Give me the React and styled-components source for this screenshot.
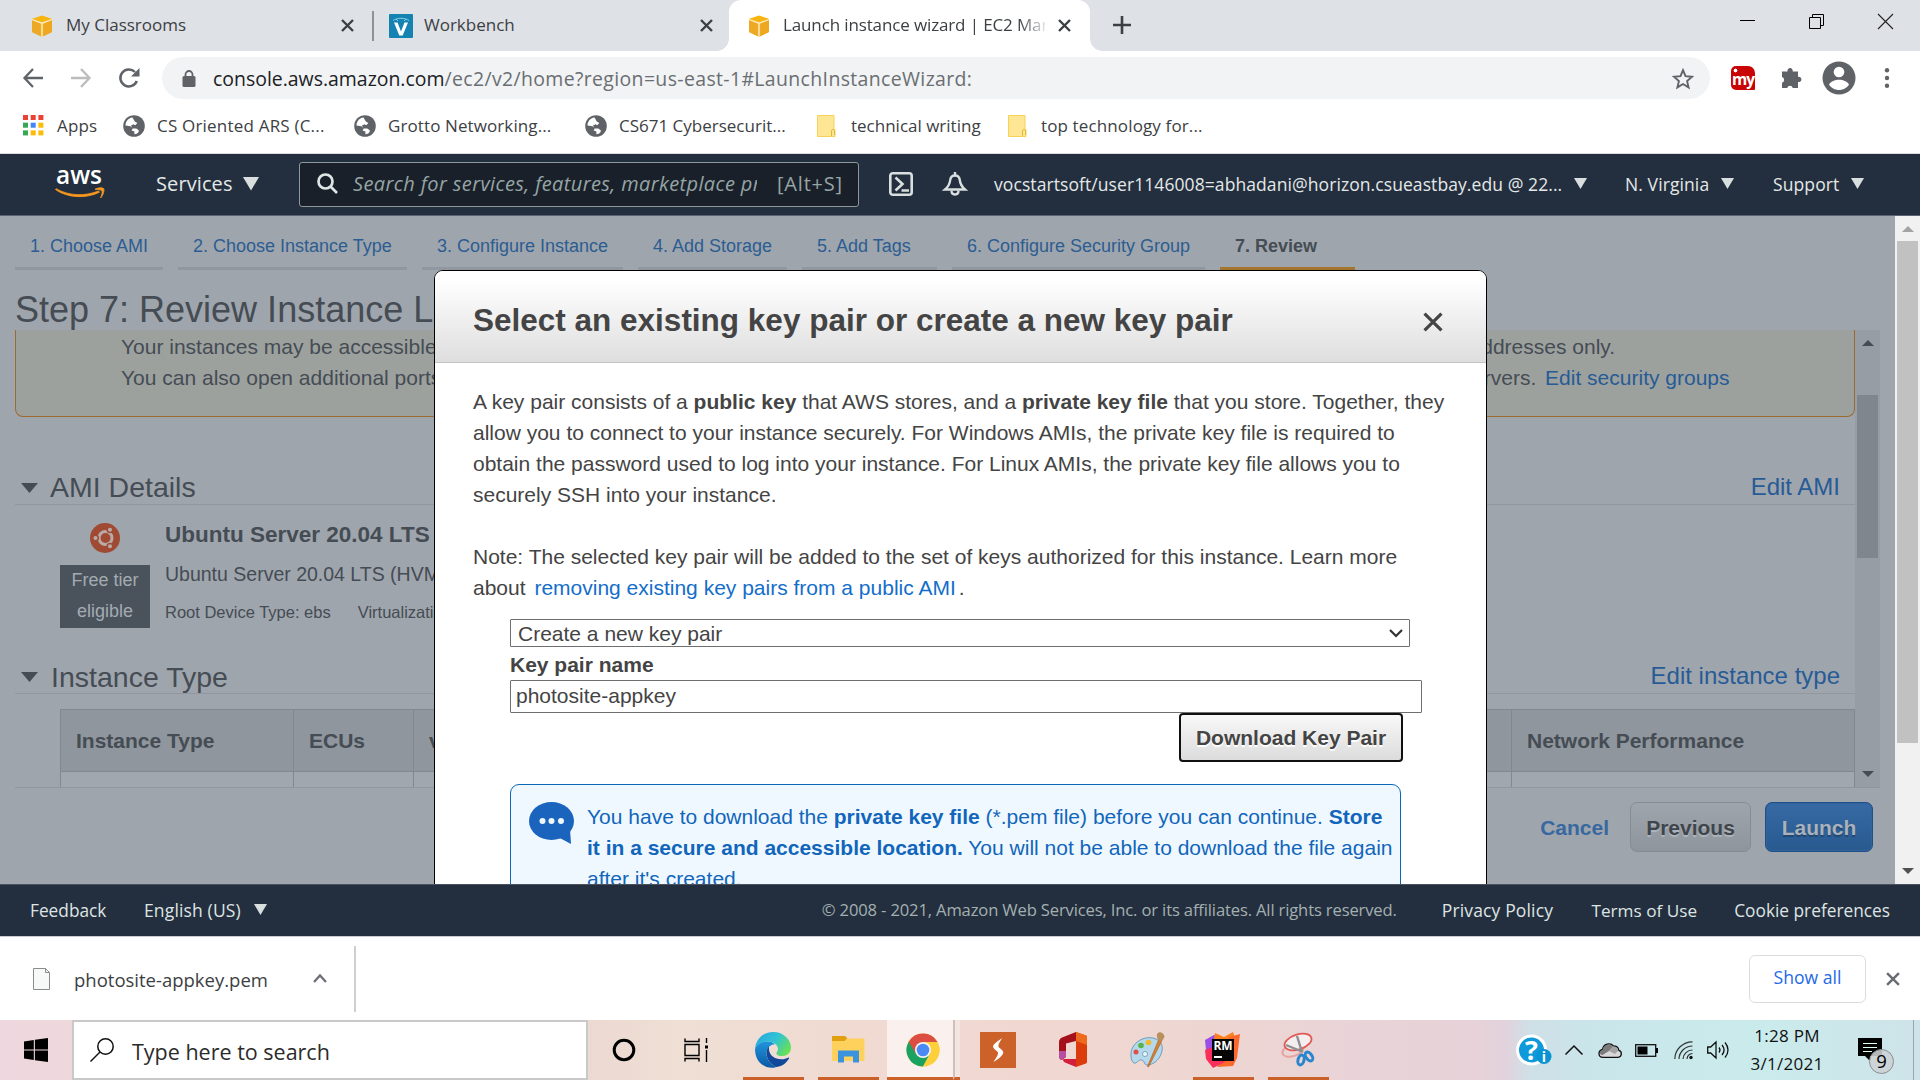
import React from "react";
import styled, { createGlobalStyle, css } from "styled-components";

const UI = `"Open Sans", "Noto Sans", sans-serif`;
const ARIAL = `"Liberation Sans", Arial, sans-serif`;

const GlobalStyle = createGlobalStyle`
  * { box-sizing: border-box; }
  html, body { margin: 0; padding: 0; overflow: hidden; }
  svg { display: block; flex: none; overflow: visible; }
`;

const Screen = styled.div`
  width: 1920px;
  height: 1080px;
  display: flex;
  flex-direction: column;
  overflow: hidden;
  background: #fff;
  font-family: ${UI};
  color: #3c4043;
`;

/* ---------- browser chrome ---------- */

const TabStrip = styled.div`
  flex: none;
  height: 51px;
  display: flex;
  background: #dee1e6;
`;

const Tab = styled.div`
  position: relative;
  display: flex;
  align-items: center;
  width: ${(p) => p.$w}px;
  padding-left: ${(p) => p.$pl}px;
  padding-right: ${(p) => p.$pr}px;
  height: 51px;
  ${(p) =>
    p.$active &&
    css`
      background: #fff;
      border-radius: 12px 12px 0 0;
      &::before,
      &::after {
        content: "";
        position: absolute;
        bottom: 0;
        width: 12px;
        height: 12px;
      }
      &::before {
        left: -12px;
        background: radial-gradient(circle at 0 0, transparent 11.5px, #fff 12px);
      }
      &::after {
        right: -12px;
        background: radial-gradient(circle at 100% 0, transparent 11.5px, #fff 12px);
      }
    `}
`;

const TabTitle = styled.span`
  flex: 1;
  margin-left: ${(p) => p.$gap || 12}px;
  margin-right: ${(p) => (p.$fade ? 13 : 0)}px;
  overflow: hidden;
  white-space: nowrap;
  font-size: 17px;
  line-height: 26px;
  letter-spacing: ${(p) => p.$ls || 0}px;
  margin-top: -1px;
  ${(p) => p.$fade && "mask-image: linear-gradient(90deg, #000 90%, rgba(0, 0, 0, 0.15) 100%);"}
`;

const TabDivider = styled.div`
  width: 2px;
  height: 30px;
  margin-top: 11px;
  background: #8f9296;
`;

const WindowControls = styled.div`
  flex: 1;
  display: flex;
  justify-content: flex-end;
  align-items: flex-start;
  padding: 14px 27px 0 0;
  gap: 54px;
`;

const NewTab = styled.div`
  padding: 16px 0 0 23px;
`;

const Toolbar = styled.div`
  flex: none;
  height: 52px;
  display: flex;
  align-items: center;
  padding: 2px 28px 0 22px;
`;

const NavIcons = styled.div`
  width: 140px;
  display: flex;
  gap: 26px;
`;

const Omnibox = styled.div`
  width: 1548px;
  height: 42px;
  padding: 0 16px 0 20px;
  border-radius: 21px;
  background: #f1f3f4;
  display: flex;
  align-items: center;
`;

const Url = styled.span`
  flex: 1;
  margin-left: 17px;
  font-size: 19.45px;
  letter-spacing: 0.37px;
  color: #6a6e72;
  white-space: nowrap;
  b {
    font-weight: 400;
    letter-spacing: 0;
    color: #202124;
  }
`;

const ToolbarActions = styled.div`
  flex: 1;
  display: flex;
  align-items: center;
  padding-left: 21px;
`;

const MyBadge = styled.div`
  width: 24px;
  height: 24px;
  border-radius: 5px 7px 1px 5px;
  background: radial-gradient(circle at 4.5px 4.5px, #fff 1.6px, transparent 2.2px), #c80404;
  color: #fff;
  font: 700 15.5px/26px ${UI};
  letter-spacing: -0.9px;
  text-align: center;
`;

const ActionSlot = styled.div`
  margin-left: ${(p) => p.$ml}px;
`;

const BookmarkBar = styled.div`
  flex: none;
  height: 51px;
  display: flex;
  align-items: center;
  padding: 0 0 5px 23px;
  border-bottom: 1px solid #dadce0;
`;

const Bookmark = styled.div`
  display: flex;
  align-items: center;
  gap: ${(p) => p.$gap}px;
  width: ${(p) => p.$w}px;
  font-size: 17px;
  letter-spacing: ${(p) => p.$ls || 0}px;
  white-space: nowrap;
`;

/* ---------- AWS navigation ---------- */

const AwsNav = styled.div`
  flex: none;
  height: 62px;
  display: flex;
  align-items: center;
  background: #232f3e;
  border-bottom: 1px solid #5c6270;
  color: #e3e8e8;
  padding-left: 55px;
`;

const NavItem = styled.div`
  display: flex;
  align-items: center;
  justify-content: space-between;
  width: ${(p) => p.$w}px;
  margin-left: ${(p) => p.$ml}px;
  padding-bottom: 2px;
  font-size: ${(p) => p.$s || 17.5}px;
  font-weight: 500;
  letter-spacing: ${(p) => p.$ls || 0}px;
  white-space: nowrap;
`;

const SearchBox = styled.div`
  width: 560px;
  height: 45px;
  margin-left: 40px;
  padding: 0 14px 2px 17px;
  display: flex;
  align-items: center;
  background: #1a2029;
  border: 1px solid #8c989a;
  border-radius: 3px;
  color: #95a5a6;
  font-size: 20px;
`;

const Placeholder = styled.span`
  width: 404px;
  margin-left: 15px;
  margin-right: 20px;
  overflow: hidden;
  white-space: nowrap;
  font-style: italic;
  letter-spacing: ${(p) => p.$ls}px;
`;

const Shortcut = styled.span`
  white-space: nowrap;
  letter-spacing: 0.8px;
`;

/* ---------- console page ---------- */

const Viewport = styled.div`
  position: relative;
  flex: none;
  height: 668px;
  display: flex;
  overflow: hidden;
  font-family: ${ARIAL};
`;

const Wizard = styled.div`
  width: 1895px;
  background: #9fa5ac;
  color: #454c54;
  padding-left: 15px;
  display: flex;
  flex-direction: column;
`;

const Steps = styled.div`
  display: flex;
  gap: 15px;
  height: 54px;
`;

const Step = styled.div`
  width: ${(p) => p.$w}px;
  padding: 18px 0 0 15px;
  font-size: 18px;
  line-height: 24px;
  white-space: nowrap;
  color: ${(p) => (p.$current ? "#454c54" : "#2c5d92")};
  font-weight: ${(p) => (p.$current ? 700 : 400)};
  border-bottom: 3px solid ${(p) => (p.$current ? "#a4752f" : "#91979e")};
`;

const PageTitle = styled.h1`
  margin: 0;
  height: 60px;
  padding-top: 19px;
  font-size: 36px;
  font-weight: 400;
  line-height: 41px;
  white-space: nowrap;
`;

const ReviewPane = styled.div`
  width: 1865px;
  height: 458px;
  display: flex;
  overflow: hidden;
  border-bottom: 1px solid #91979e;
`;

const ReviewBody = styled.div`
  width: 1840px;
  height: 457px;
  overflow: hidden;
`;

const Warning = styled.div`
  height: 87px;
  padding: 1px 0 0 105px;
  background: #9da19e;
  border: 1px solid #9b6a2c;
  border-top: 0;
  border-radius: 0 0 8px 8px;
  font-size: 21px;
  line-height: 31px;
  white-space: nowrap;
`;

const Link = styled.a`
  color: ${(p) => (p.$dim ? "#275b96" : "#146eca")};
  margin: 0 ${(p) => (p.$mr ? p.$mr : 0)}px 0 3px;
`;

const SectionHead = styled.div`
  display: flex;
  align-items: center;
  height: ${(p) => p.$h}px;
  padding: ${(p) => p.$pt}px 15px 0 6px;
  border-bottom: 1px solid #91979e;
  font-size: 28.5px;
  line-height: 32px;
`;

const SectionTitle = styled.span`
  flex: 1;
  margin: ${(p) => p.$mt || 0}px 0 0 ${(p) => p.$ml}px;
`;

const EditLink = styled.a`
  color: #275b96;
  font-size: 24px;
  margin-top: -1px;
`;

const Ami = styled.div`
  display: flex;
  height: 140px;
  padding: 18px 0 0 45px;
`;

const AmiBadgeCol = styled.div`
  width: 90px;
  display: flex;
  flex-direction: column;
  align-items: center;
  gap: 12px;
`;

const FreeTier = styled.div`
  width: 90px;
  height: 63px;
  background: #4a525b;
  color: #a3abb2;
  text-align: center;
  font-size: 18px;
  line-height: 31px;
`;

const AmiInfo = styled.div`
  margin-left: 15px;
  white-space: nowrap;
`;

const AmiName = styled.div`
  font-size: 22.5px;
  font-weight: 700;
  line-height: 24px;
`;

const AmiDesc = styled.div`
  margin-top: 15px;
  font-size: 19.5px;
  line-height: 24px;
`;

const AmiMeta = styled.div`
  display: flex;
  gap: 27px;
  margin-top: 14px;
  font-size: 16.5px;
  line-height: 24px;
`;

const InstanceTable = styled.div`
  width: 1795px;
  margin: 15px 0 0 45px;
  border: 1px solid #81888f;
  display: grid;
  grid-template-columns: 232px 120px 220px 240px 270px 368px 1fr;
`;

const HeadCell = styled.div`
  height: 62px;
  padding-left: 15px;
  background: #8f969d;
  border-left: ${(p) => (p.$first ? 0 : 1)}px solid #81888f;
  border-bottom: 1px solid #81888f;
  font-size: 21px;
  font-weight: 700;
  line-height: 61px;
  white-space: nowrap;
`;

const BodyCell = styled.div`
  height: 40px;
  background: #a1a7ae;
  border-left: ${(p) => (p.$first ? 0 : 1)}px solid #81888f;
`;

const Scrollbar = styled.div`
  width: 25px;
  height: 100%;
  display: flex;
  flex-direction: column;
  align-items: center;
  background: ${(p) => (p.$dim ? "#979da5" : "#f1f1f1")};
  padding: 10px 0;
`;

const Thumb = styled.div`
  width: 21px;
  height: ${(p) => p.$h}px;
  margin-top: ${(p) => p.$mt}px;
  margin-bottom: auto;
  background: ${(p) => p.$c};
`;

const WizardActions = styled.div`
  display: flex;
  align-items: center;
  justify-content: flex-end;
  gap: 14px;
  padding: 14px 22px 0 0;
  font-size: 21px;
  font-weight: 700;
`;

const CancelLink = styled.a`
  color: #3868a0;
  margin: 1px 7px 0 0;
`;

const WizardButton = styled.div`
  height: 50px;
  width: ${(p) => p.$w}px;
  border-radius: 7px;
  text-align: center;
  line-height: 49px;
  ${(p) =>
    p.$primary
      ? css`
          color: #a9b1ba;
          border: 1px solid #1d5089;
          background: linear-gradient(#376aa4, #285a90);
          text-shadow: 0 2px 1px #23466f;
          box-shadow: inset 0 0 0 1px #32649c;
        `
      : css`
          color: #3f454c;
          border: 1px solid #868c93;
          background: linear-gradient(#9fa5ac, #8f959c);
          text-shadow: 0 2px 1px #b0b6bd;
        `}
`;

/* ---------- dialog ---------- */

const Dialog = styled.div`
  position: absolute;
  left: 434px;
  top: 54px;
  width: 1053px;
  height: 700px;
  border: 1px solid #000;
  border-radius: 9px;
  background: #fff;
  color: #444;
  overflow: hidden;
`;

const DialogHead = styled.div`
  display: flex;
  align-items: center;
  justify-content: space-between;
  height: 92px;
  padding: 10px 43px 0 38px;
  background: linear-gradient(#fff, #fff 10%, #dedede);
  border-bottom: 1px solid #c4c4c4;
`;

const DialogTitle = styled.h2`
  margin: 0 0 4px;
  font-size: 31.5px;
  line-height: 36px;
  font-weight: 700;
`;

const DialogBody = styled.div`
  padding: 23px 39px 0 38px;
  font-size: 21px;
  line-height: 31.1px;
`;

const Para = styled.p`
  margin: 0 0 31px;
  white-space: nowrap;
`;

const KeyForm = styled.div`
  width: 912px;
  margin: -16px 0 0 37px;
  display: flex;
  flex-direction: column;
`;

const Select = styled.div`
  width: 900px;
  height: 28px;
  padding: 1px 6px 0 7px;
  display: flex;
  align-items: center;
  justify-content: space-between;
  border: 1px solid #6f6f6f;
  border-radius: 1px;
`;

const FieldLabel = styled.label`
  font-weight: 700;
  line-height: 33px;
  height: 33px;
  padding-top: 1px;
`;

const Input = styled.div`
  width: 912px;
  height: 33px;
  padding-left: 5px;
  line-height: 30px;
  border: 1px solid #6f6f6f;
  border-radius: 1px;
`;

const DownloadButton = styled.div`
  width: 224px;
  height: 49px;
  margin: 0 0 0 669px;
  border: 2px solid #101010;
  border-radius: 4px;
  background: linear-gradient(#f8f8f8, #dcdcdc);
  text-align: center;
  line-height: 45px;
  font-weight: 700;
  text-shadow: 0 2px 1px #fff;
`;

const Notice = styled.div`
  width: 891px;
  height: 160px;
  margin-top: 22px;
  padding: 16px 0 0 18px;
  display: flex;
  gap: 12px;
  border: 1px solid #0b66b8;
  border-radius: 9px;
  background: #f0f8ff;
  color: #1166bb;
  white-space: nowrap;
`;

/* ---------- footer and shelf ---------- */

const Footer = styled.div`
  flex: none;
  height: 52px;
  display: flex;
  align-items: center;
  padding: 1px 30px 0 0;
  background: #232f3e;
  border-top: 1px solid #4b525d;
  color: #dfe4e4;
`;

const Copyright = styled.span`
  width: 575px;
  margin-left: 555px;
  padding-bottom: 3px;
  color: #a3b0b1;
  font-size: 16.6px;
  white-space: nowrap;
  letter-spacing: ${(p) => p.$ls}px;
`;

const Shelf = styled.div`
  flex: none;
  height: 84px;
  display: flex;
  align-items: center;
  padding: 0 20px 0 33px;
  border-top: 1px solid #c9ccd0;
`;

const FileName = styled.span`
  width: 239px;
  margin-left: 24px;
  padding-top: 1px;
  font-size: 18.5px;
`;

const ShelfDivider = styled.div`
  width: 2px;
  height: 66px;
  margin-left: 27px;
  background: #cfcfcf;
`;

const ShowAll = styled.div`
  width: 117px;
  height: 48px;
  margin: 0 20px 0 auto;
  border: 1px solid #dadce0;
  border-radius: 6px;
  color: #2468e8;
  font-size: 17.6px;
  font-weight: 500;
  line-height: 43px;
  text-align: center;
`;

/* ---------- taskbar ---------- */

const Taskbar = styled.div`
  flex: none;
  height: 60px;
  display: flex;
  background: linear-gradient(
    90deg,
    #eed7de 0,
    #eed8dc 72px,
    #ecd9d2 590px,
    #efdfd4 680px,
    #f0dad2 860px,
    #f0d7d1 1100px,
    #ecd5d3 1260px,
    #e8d3d8 1360px,
    #e6d2d8 1480px,
    #e2d2dc 1505px,
    #cfe0e7 1530px,
    #c9e6ea 1600px,
    #caebec 1760px,
    #cee3e9 1920px
  );
`;

const StartButton = styled.div`
  width: 72px;
  padding: 18px 0 0 24px;
`;

const TaskSearch = styled.div`
  width: 516px;
  height: 60px;
  padding: 0 0 0 16px;
  display: flex;
  align-items: center;
  background: #fff;
  border: 2px solid #c8c9c8;
  color: #2b2b2b;
  font-size: 21.5px;
  span {
    margin: 3px 0 0 18px;
  }
`;

const TaskItem = styled.div`
  width: ${(p) => p.$w}px;
  margin-left: ${(p) => p.$ml || 0}px;
  height: 60px;
  display: flex;
  align-items: center;
  justify-content: center;
  background: ${(p) => (p.$active ? "#faf1ee" : "transparent")};
  border-bottom: 3px solid ${(p) => (p.$running ? "#cb6029" : "transparent")};
  padding: 2px ${(p) => (p.$active ? 0 : 1)}px 0 ${(p) => (p.$active ? 5 : 0)}px;
`;

const ActiveStack = styled.div`
  width: 7px;
  height: 60px;
  background: #f3e5e0;
  border-left: 2px solid #d3bfba;
  border-bottom: 3px solid #cb6029;
`;

const Tray = styled.div`
  flex: 1;
  display: flex;
  align-items: center;
  padding-left: 187px;
`;

const TrayIcon = styled.div`
  margin-left: ${(p) => p.$ml || 0}px;
`;

const Clock = styled.div`
  width: 76px;
  margin-left: 20px;
  color: #111;
  font-size: 17px;
  line-height: 28px;
  text-align: center;
  letter-spacing: 0.3px;
`;

const Notify = styled.div`
  position: relative;
  width: 36px;
  height: 40px;
  margin-left: 33px;
`;

const NotifyCount = styled.span`
  position: absolute;
  left: 11px;
  top: 19px;
  width: 25px;
  height: 25px;
  border: 1px solid #8a8f91;
  border-radius: 50%;
  background: rgba(205, 210, 212, 0.88);
  color: #000;
  font-size: 18.5px;
  font-weight: 500;
  line-height: 22px;
  text-align: center;
`;

const DesktopEdge = styled.div`
  width: 7px;
  height: 60px;
  margin-left: auto;
  border-left: 1px solid #98a9ae;
`;

/* ---------- icons ---------- */

const Cross = ({ s = 13, w = 2.4, c = "#3c4043" }) => (
  <svg width={s} height={s} viewBox="0 0 13 13" stroke={c} strokeWidth={w} fill="none">
    <path d="M1 1L12 12M12 1L1 12" />
  </svg>
);

const Cube = () => (
  <svg width="22" height="22" viewBox="0 0 22 22">
    <path d="M1 4L11 1l10 3v13l-10 5L1 17z" fill="#f2b12c" />
    <path d="M1 4l10-3.5L21 4l-10 4z" fill="#f8b40f" />
    <path d="M1 5l8.5 3.5V21L1 17z" fill="#eca926" />
    <path d="M21 5l-8.500 3.500V21L21 17z" fill="#eda820" />
    <path d="M1 4.500L11 8.200l10-3.700M11 8v14" stroke="#fbeecb" strokeWidth="1.3" fill="none" />
  </svg>
);

const WorkbenchIcon = () => (
  <svg width="24" height="24" viewBox="0 0 24 24">
    <rect width="24" height="24" rx="1" fill="#1483b2" />
    <path d="M5 8.500h3.500l3.500 9 3.500-9H19l-5.300 13h-3.400z" fill="#fff" />
    <path d="M4 6.500C8 3.500 16 3.500 20 6.500M7 5l2 2M17 5l-2 2" stroke="#7fd0ea" strokeWidth="1" fill="none" />
  </svg>
);

const Globe = () => (
  <svg width="22" height="22" viewBox="0 0 22 22">
    <circle cx="11" cy="11" r="10.800" fill="#5f6368" />
    <path
      d="M9.500 2.500C5 3 2.500 6.800 2.500 10.500l5 .8 2.300 2.200-1.200 2 2.800 1v2.700c3.600-.2 4.600-2.200 4.300-3.900l-2.400-1.700-4-.4-1.300-2.600 2.600-1.300 1.600 1 2.200-2.300-2.600-1.600z"
      fill="#fff"
    />
    <path d="M14 4.500l-1.500 1.800 3 1.600-1.200 2.400 2.700 2.300 2-.6c.3-3-1.800-6.200-5-7.500z" fill="#5f6368" />
  </svg>
);

const Folder = () => (
  <svg width="19" height="22" viewBox="0 0 19 22">
    <path d="M.5.5h16.500v14h1v7H.5z" fill="#ffe694" stroke="#f3d257" />
    <path d="M14.500 21v-5.500c0-1.200 3-1.200 3 0V20" fill="#ffe694" stroke="#dfb93a" />
  </svg>
);

const AppsGrid = () => {
  const colors = ["#ea4335", "#ea4335", "#ea4335", "#34a853", "#4285f4", "#fbbc05", "#34a853", "#fbbc05", "#fbbc05"];
  return (
    <svg width="21" height="21" viewBox="0 0 21 21">
      {colors.map((c, i) => (
        <rect key={i} x={(i % 3) * 7.7} y={Math.floor(i / 3) * 7.7} width="5" height="5" fill={c} />
      ))}
    </svg>
  );
};

const Caret = ({ s = 13 }) => (
  <svg width={s} height={s * 0.85} viewBox="0 0 13 11">
    <path d="M0 0h13L6.500 11z" fill="#d9dfdf" />
  </svg>
);

const Tri = ({ up, c, w = 12, h = 6 }) => (
  <svg width={w} height={h} viewBox="0 0 12 6" preserveAspectRatio="none">
    <path d={up ? "M0 6h12L6 0z" : "M0 0h12L6 6z"} fill={c} />
  </svg>
);

const AwsLogo = () => (
  <svg width="50" height="32" viewBox="0 0 50 32">
    <text x="24" y="15" fontFamily="Open Sans, sans-serif" fontWeight="600" fontSize="26" textLength="46" lengthAdjust="spacingAndGlyphs" textAnchor="middle" fill="#fff">
      aws
    </text>
    <path d="M.5 20.500C12 29 31 30 44.500 23.200l-1-1.200C30 27.500 14 27 1 19.700z" fill="#f7981f" stroke="#f7981f" strokeWidth=".8" />
    <path d="M40 20.300c3-1.700 7.500-1.900 8.600-.8 1 1.200-.1 6.500-3 9.500 1.200-3.200 2-6.200 1.300-7.300-.8-.9-3.800-1-6.900-1.400z" fill="#f7981f" stroke="#f7981f" strokeWidth=".8" />
  </svg>
);

const SpeechIcon = () => (
  <svg width="46" height="43" viewBox="0 0 46 43">
    <ellipse cx="22.500" cy="20" rx="22.500" ry="19" fill="#1a64bd" />
    <path d="M29 36l13 7-1-15z" fill="#1a64bd" />
    <circle cx="13.500" cy="20" r="3" fill="#f0f8ff" />
    <circle cx="22.500" cy="20" r="3" fill="#f0f8ff" />
    <circle cx="32" cy="20" r="3" fill="#f0f8ff" />
  </svg>
);

const UbuntuIcon = () => (
  <svg width="30" height="30" viewBox="0 0 30 30">
    <circle cx="15" cy="15" r="15" fill="#a04a33" />
    <circle cx="15.500" cy="15" r="6.500" fill="none" stroke="#b9aaa8" strokeWidth="3" />
    <g stroke="#a04a33" strokeWidth="1.500" fill="#b9aaa8">
      <circle cx="5.500" cy="15" r="2.800" />
      <circle cx="20" cy="6.800" r="2.800" />
      <circle cx="20" cy="23.200" r="2.800" />
    </g>
  </svg>
);

const EdgeIcon = () => (
  <svg width="36" height="36" viewBox="0 0 36 36">
    <defs>
      <linearGradient id="edgeTop" x1="0" x2="1" y1="0.200" y2="0.700">
        <stop offset="0" stopColor="#2aa6de" />
        <stop offset=".5" stopColor="#2fc3d4" />
        <stop offset="1" stopColor="#6be24f" />
      </linearGradient>
      <linearGradient id="edgeLeft" x1="0" x2="0" y1="0" y2="1">
        <stop offset="0" stopColor="#1f95dd" />
        <stop offset="1" stopColor="#0c59a4" />
      </linearGradient>
    </defs>
    <path d="M0 17C1 6 9 0 18 0c11 0 18 8 18 15.500 0 5.500-4 8.500-8.500 8.500-4 0-6.500-1.500-6-3 .5-1.300 1.500-2 1.500-4 0-4-4.500-7.500-10-7.500C7 9.500 2 12 0 17z" fill="url(#edgeTop)" />
    <path d="M0 17c2-5 7-7.500 12.500-7.500 3.500 0 6 1.200 7.500 2.700-6 .3-8.500 4.800-8.500 9.300 0 6 4.500 11.500 10 13.500-1 .5-2.500.8-4 .8C7 36 0 28 0 17z" fill="url(#edgeLeft)" />
    <path d="M14 14.500c-2 1.800-2.500 4.500-2.500 7C12 30 19 34.500 22 35c5-.8 9.500-4 12-8.500.5-.9-.3-1.200-1-.8-1.500.8-4 1.500-6.500 1.500-7 0-12-4-12.500-9.500z" fill="#12489a" />
  </svg>
);

const ExplorerIcon = () => (
  <svg width="33" height="27" viewBox="0 0 33 27">
    <path d="M0 1c0-.6.400-1 1-1h12l2.500 2.500L13 5H0z" fill="#e0a010" />
    <path d="M0 5h12.500l2.500-2.500h16.500c.6 0 1 .4 1 1V24c0 .6-.4 1-1 1H1c-.6 0-1-.4-1-1z" fill="#fdd15c" />
    <path d="M6 14.500h21V26.500h-6v-6h-9v6H6z" fill="#3a93dc" />
  </svg>
);

const ChromeIcon = () => (
  <svg width="34" height="34" viewBox="0 0 34 34">
    <circle cx="17" cy="17" r="16.500" fill="#fdcf3a" />
    <path d="M17 17L2.700 8.700A16.500 16.500 0 0 0 17 33.500L24.400 21z" fill="#1aa260" />
    <path d="M17 9h14.500A16.500 16.500 0 0 0 2.700 8.700L10 21z" fill="#dc4e41" />
    <path d="M17 9h14.500A16.500 16.500 0 0 1 17 33.500L24.200 20z" fill="#fdcf3a" />
    <circle cx="17" cy="17" r="8" fill="#f6f3ef" />
    <circle cx="17" cy="17" r="6.300" fill="#4a8af4" />
  </svg>
);

const SIcon = () => (
  <svg width="36" height="36" viewBox="0 0 36 36">
    <rect width="36" height="36" fill="#cc6229" />
    <path d="M22 6c-3 2.500-8.500 5.500-9 8.500.3 2.500 4 4 5 6 .3 3-2.500 6-4.500 9.500 4-2.500 9-5.500 9.800-9.500-.3-3-4.500-4-5-6.500C18.500 11.500 20.500 9 22 6z" fill="#fff" />
  </svg>
);

const OfficeIcon = () => (
  <svg width="28" height="35" viewBox="0 0 28 35">
    <path d="M17 0L3 5.500C1 6.500 0 8 0 10v14c0 3 2 4.500 3.500 3.500L7 25V11.500L17 9z" fill="#a4111b" />
    <path d="M17 0l10 3.500c.6.200 1 .7 1 1.500v25c0 .8-.4 1.300-1 1.500L17 35z" fill="#dc3c0c" />
    <path d="M17 0l10 3.500c.6.200 1 .7 1 1.500v8L17 9z" fill="#ee6a1c" />
    <path d="M5 27h12v8L6 30.500c-2-.8-2.500-3.500-1-3.500z" fill="#d31e3c" />
    <path d="M0 19v5c0 3 2 4.500 3.500 3.500L7 25v-6z" fill="#b64fa0" />
  </svg>
);

const PaintIcon = () => (
  <svg width="36" height="36" viewBox="0 0 36 36">
    <path d="M1 24C0 12 12 4 23 6c9 2 11 9 8 16-2 6-8 11-14 11-3 0-2-4-5-5-4-1-5 4-8 3-2-1-3-4-3-7z" fill="#b4d8ec" stroke="#6d9dbc" />
    <circle cx="6" cy="20" r="2.500" fill="#e04f45" />
    <circle cx="11" cy="13.500" r="2.800" fill="#58b348" />
    <circle cx="18.500" cy="10.500" r="2.800" fill="#f2b92c" />
    <circle cx="15" cy="22" r="2.500" fill="#eef5f9" stroke="#7ba6c0" />
    <path d="M29 7l3 1.500L18.500 35l-1-.5z" fill="#d98032" stroke="#a75e1c" strokeWidth=".6" />
    <path d="M27 2c2-3 6-2 7.500 2-.5 3-2 4.500-4 5-3-1-4-4-3.500-7z" fill="#b8905e" />
  </svg>
);

const RubyMineIcon = () => (
  <svg width="36" height="36" viewBox="0 0 36 36">
    <path d="M0 8l9-5 10 4v18L2 28z" fill="#9a4fe6" />
    <path d="M10 1l9 4L28 0l2 6-8 8H8z" fill="#fc801d" />
    <path d="M24 5l11-3-3 24-4 8-16 1 8-10z" fill="#fb6a2c" />
    <path d="M0 18l8-3 12 15-12 6-7-9z" fill="#fb2f5c" />
    <rect x="7" y="7" width="22" height="22" fill="#060606" />
    <text x="8.500" y="18" fill="#fff" fontFamily="Open Sans, sans-serif" fontWeight="700" fontSize="12" textLength="19">
      RM
    </text>
    <rect x="9" y="24" width="8" height="2" fill="#fff" />
  </svg>
);

const SnipIcon = () => (
  <svg width="34" height="34" viewBox="0 0 34 34">
    <ellipse cx="12" cy="17" rx="11" ry="6" fill="none" stroke="#e9a3a0" strokeWidth="2" transform="rotate(-20 12 17)" />
    <ellipse cx="17" cy="9" rx="14" ry="7.500" fill="#f5eeee" stroke="#e05a55" strokeWidth="1.800" transform="rotate(-18 17 9)" />
    <path d="M16 3l5 16M5 12l17 7" stroke="#8d8f93" strokeWidth="2.400" />
    <ellipse cx="20" cy="27" rx="3" ry="5" fill="none" stroke="#2a86cc" strokeWidth="3" transform="rotate(15 20 27)" />
    <ellipse cx="28" cy="23.500" rx="3" ry="5" fill="none" stroke="#2a86cc" strokeWidth="3" transform="rotate(-35 28 23.500)" />
  </svg>
);

const HelpIcon = () => (
  <svg width="36" height="32" viewBox="0 0 36 32">
    <circle cx="15.500" cy="16" r="14" fill="#0d99da" stroke="#fff" strokeWidth="3" />
    <text x="15.500" y="25.500" fill="#fff" fontFamily="Open Sans, sans-serif" fontWeight="700" fontSize="27" textAnchor="middle">
      ?
    </text>
    <circle cx="28" cy="22.500" r="7.500" fill="#0a93d3" />
    <text x="28" y="28" fill="#fff" fontFamily="Open Sans, sans-serif" fontWeight="700" fontSize="14" textAnchor="middle">
      i
    </text>
  </svg>
);

/* ---------- page ---------- */

const STEPS = [
  ["1. Choose AMI", 148],
  ["2. Choose Instance Type", 229],
  ["3. Configure Instance", 201],
  ["4. Add Storage", 149],
  ["5. Add Tags", 135],
  ["6. Configure Security Group", 253],
  ["7. Review", 135],
];

const COLUMNS = ["Instance Type", "ECUs", "vCPUs", "Memory (GiB)", "Instance Storage (GB)", "EBS-Optimized Available", "Network Performance"];

function BrowserTabs() {
  return (
    <TabStrip>
      <Tab $w={372} $pl={31} $pr={18}>
        <Cube />
        <TabTitle $gap={13}>My Classrooms</TabTitle>
        <Cross />
      </Tab>
      <TabDivider />
      <Tab $w={355} $pl={15} $pr={16}>
        <WorkbenchIcon />
        <TabTitle $gap={11}>Workbench</TabTitle>
        <Cross />
      </Tab>
      <Tab $active $w={361} $pl={19} $pr={19}>
        <Cube />
        <TabTitle $fade $gap={13} $ls={-0.13}>Launch instance wizard | EC2 Man</TabTitle>
        <Cross />
      </Tab>
      <NewTab>
        <svg width="18" height="18" viewBox="0 0 18 18" stroke="#3c4043" strokeWidth="2.600">
          <path d="M9 0v18M0 9h18" />
        </svg>
      </NewTab>
      <WindowControls>
        <svg width="15" height="15" viewBox="0 0 15 15" stroke="#000" fill="none">
          <path d="M0 6.500h15" />
        </svg>
        <svg width="15" height="15" viewBox="0 0 15 15" stroke="#000" fill="none">
          <path d="M.5 3.500h11v11H.5zM3.500 3V.5h11v11H12" />
        </svg>
        <svg width="15" height="15" viewBox="0 0 15 15" stroke="#222" fill="none" strokeWidth="1.100">
          <path d="M0 0l15 15M15 0L0 15" />
        </svg>
      </WindowControls>
    </TabStrip>
  );
}

function AddressBar() {
  return (
    <Toolbar>
      <NavIcons>
        <svg width="22" height="20" viewBox="0 0 22 20" fill="none" stroke="#5f6368" strokeWidth="2.300">
          <path d="M21 10H3M11 1L2.500 10l8.500 9" />
        </svg>
        <svg width="22" height="20" viewBox="0 0 22 20" fill="none" stroke="#babcbe" strokeWidth="2.300">
          <path d="M1 10h18M11 1l8.500 9-8.500 9" />
        </svg>
        <svg width="22" height="20" viewBox="0 0 22 20" fill="none" stroke="#5f6368" strokeWidth="2.500">
          <path d="M18.800 13A8.500 8.500 0 1 1 17 4" />
          <path d="M21.500 0v8.500H13z" fill="#5f6368" stroke="none" />
        </svg>
      </NavIcons>
      <Omnibox>
        <svg width="14" height="17" viewBox="0 0 14 17">
          <rect x="0.500" y="6" width="13" height="11" rx="1.500" fill="#5f6368" />
          <path d="M3.500 7V4.500a3.500 3.500 0 0 1 7 0V7" fill="none" stroke="#5f6368" strokeWidth="1.800" />
        </svg>
        <Url>
          <b>console.aws.amazon.com</b>/ec2/v2/home?region=us-east-1#LaunchInstanceWizard:
        </Url>
        <svg width="22" height="21" viewBox="0 0 22 21" fill="none" stroke="#5f6368" strokeWidth="1.900">
          <path d="M11 2.200l2.500 6 6.500.6-4.900 4.300 1.500 6.300-5.600-3.400-5.600 3.400 1.500-6.300L2 8.800l6.500-.6z" />
        </svg>
      </Omnibox>
      <ToolbarActions>
        <MyBadge>my</MyBadge>
        <ActionSlot $ml={26}>
          <svg width="22" height="22" viewBox="0 0 22 22" fill="#5f6368">
            <path d="M1 4.500h5.500a2.700 2.700 0 1 1 5.200 0H17v5.300a2.700 2.700 0 1 1 0 5.200v6h-5.200a2.900 2.900 0 0 0-5.600 0H1v-5.300a2.900 2.900 0 0 0 0-5.600z" />
          </svg>
        </ActionSlot>
        <ActionSlot $ml={19}>
          <svg width="34" height="34" viewBox="0 0 34 34">
            <circle cx="17" cy="17" r="16.500" fill="#5f6368" />
            <circle cx="17" cy="11" r="5.300" fill="#fff" />
            <path d="M7 23.500c1.500-3 6-4.700 10-4.700s8.500 1.700 10 4.700c-2 3.300-6 5.500-10 5.500s-8-2.200-10-5.500z" fill="#fff" />
          </svg>
        </ActionSlot>
        <ActionSlot $ml={26}>
          <svg width="10" height="20" viewBox="0 0 10 20" fill="#5f6368">
            <circle cx="5" cy="2.300" r="2.200" />
            <circle cx="5" cy="10" r="2.200" />
            <circle cx="5" cy="17.700" r="2.200" />
          </svg>
        </ActionSlot>
      </ToolbarActions>
    </Toolbar>
  );
}

function Bookmarks() {
  return (
    <BookmarkBar>
      <Bookmark $w={100} $gap={13} $ls={0.15}><AppsGrid />Apps</Bookmark>
      <Bookmark $w={231} $gap={12} $ls={0.2}><Globe />CS Oriented ARS (C...</Bookmark>
      <Bookmark $w={231} $gap={12} $ls={0.1}><Globe />Grotto Networking...</Bookmark>
      <Bookmark $w={232} $gap={12}><Globe />CS671 Cybersecurit...</Bookmark>
      <Bookmark $w={191} $gap={15}><Folder />technical writing</Bookmark>
      <Bookmark $w={220} $gap={14} $ls={0.13}><Folder />top technology for...</Bookmark>
    </BookmarkBar>
  );
}

function Navigation() {
  return (
    <AwsNav>
      <AwsLogo />
      <NavItem $w={103} $ml={51} $s={20} $ls={0.1}>Services<Caret s={16} /></NavItem>
      <SearchBox>
        <svg width="21" height="21" viewBox="0 0 21 21" fill="none" stroke="#dfe5e5" strokeWidth="2.700">
          <circle cx="8.500" cy="8.500" r="7" />
          <path d="M13.500 13.500l6.500 6.500" />
        </svg>
        <Placeholder $ls={0.38}>Search for services, features, marketplace pr</Placeholder>
        <Shortcut>[Alt+S]</Shortcut>
      </SearchBox>
      <NavItem $w={24} $ml={30}>
        <svg width="24" height="24" viewBox="0 0 24 24" fill="none" stroke="#d9dfdf" strokeWidth="2.600">
          <rect x="1.300" y="1.300" width="21.400" height="21.400" rx="2.500" />
          <path d="M6.500 5.500l7 6.500-7 6.500M12.500 18.500H20" />
        </svg>
      </NavItem>
      <NavItem $w={24} $ml={30}>
        <svg width="24" height="24" viewBox="0 0 24 24" fill="none" stroke="#d9dfdf" strokeWidth="2.400">
          <path d="M12 0v3.500M12 3.500c3 0 4.500 2 4.800 4.500.4 4 1.700 6.500 5.200 9.500H2c3.500-3 4.800-5.500 5.200-9.500.3-2.500 1.800-4.500 4.800-4.500z" />
          <path d="M8.500 18.500c0 2.500 1.500 4 3.500 4s3.500-1.500 3.500-4" />
        </svg>
      </NavItem>
      <NavItem $w={593} $ml={27} $ls={0.08}>vocstartsoft/user1146008=abhadani@horizon.csueastbay.edu @ 22...<Caret /></NavItem>
      <NavItem $w={109} $ml={38} $ls={0.1}>N. Virginia<Caret /></NavItem>
      <NavItem $w={91} $ml={39} $ls={0.1}>Support<Caret /></NavItem>
    </AwsNav>
  );
}

function ReviewPage() {
  return (
    <Wizard>
      <Steps>
        {STEPS.map(([label, w], i) => (
          <Step key={label} $w={w} $current={i === 6}>{label}</Step>
        ))}
      </Steps>
      <PageTitle>Step 7: Review Instance Launch</PageTitle>
      <ReviewPane>
        <ReviewBody>
          <Warning>
            Your instances may be accessible from any IP address. We recommend that you update your security group rules to allow access from known IP addresses only.
            <br />
            You can also open additional ports in your security group to facilitate access to the application or service you're running, e.g., HTTP (80) for web servers. <Link $dim>Edit security groups</Link>
          </Warning>
          <SectionHead $h={88} $pt={54}>
            <Tri c="#454c54" w={17} h={10} />
            <SectionTitle $ml={12} $mt={-1}>AMI Details</SectionTitle>
            <EditLink>Edit AMI</EditLink>
          </SectionHead>
          <Ami>
            <AmiBadgeCol>
              <UbuntuIcon />
              <FreeTier>Free tier<br />eligible</FreeTier>
            </AmiBadgeCol>
            <AmiInfo>
              <AmiName>Ubuntu Server 20.04 LTS (HVM), SSD</AmiName>
              <AmiDesc>Ubuntu Server 20.04 LTS (HVM), EBS</AmiDesc>
              <AmiMeta><span>Root Device Type: ebs</span><span>Virtualization type: hvm</span></AmiMeta>
            </AmiInfo>
          </Ami>
          <SectionHead $h={49} $pt={15}>
            <Tri c="#454c54" w={17} h={10} />
            <SectionTitle $ml={13}>Instance Type</SectionTitle>
            <EditLink>Edit instance type</EditLink>
          </SectionHead>
          <InstanceTable>
            {COLUMNS.map((c, i) => <HeadCell key={c} $first={i === 0}>{c}</HeadCell>)}
            {COLUMNS.map((c, i) => <BodyCell key={c} $first={i === 0} />)}
          </InstanceTable>
        </ReviewBody>
        <Scrollbar $dim>
          <Tri up c="#454c54" />
          <Thumb $h={163} $mt={49} $c="#80868d" />
          <Tri c="#454c54" />
        </Scrollbar>
      </ReviewPane>
      <WizardActions>
        <CancelLink>Cancel</CancelLink>
        <WizardButton $w={121}>Previous</WizardButton>
        <WizardButton $w={108} $primary>Launch</WizardButton>
      </WizardActions>
    </Wizard>
  );
}

function KeyPairDialog() {
  return (
    <Dialog>
      <DialogHead>
        <DialogTitle>Select an existing key pair or create a new key pair</DialogTitle>
        <Cross s={20} w={2.1} c="#444" />
      </DialogHead>
      <DialogBody>
        <Para>
          A key pair consists of a <b>public key</b> that AWS stores, and a <b>private key file</b> that you store. Together, they<br />
          allow you to connect to your instance securely. For Windows AMIs, the private key file is required to<br />
          obtain the password used to log into your instance. For Linux AMIs, the private key file allows you to<br />
          securely SSH into your instance.
        </Para>
        <Para>
          Note: The selected key pair will be added to the set of keys authorized for this instance. Learn more<br />
          about <Link $mr={3}>removing existing key pairs from a public AMI</Link>.
        </Para>
        <KeyForm>
          <Select>
            Create a new key pair
            <svg width="14" height="9" viewBox="0 0 14 9" fill="none" stroke="#333" strokeWidth="2.200">
              <path d="M1 1l6 6 6-6" />
            </svg>
          </Select>
          <FieldLabel>Key pair name</FieldLabel>
          <Input>photosite-appkey</Input>
          <DownloadButton>Download Key Pair</DownloadButton>
          <Notice>
            <SpeechIcon />
            <div>
              You have to download the <b>private key file</b> (*.pem file) before you can continue. <b>Store</b><br />
              <b>it in a secure and accessible location.</b> You will not be able to download the file again<br />
              after it's created.
            </div>
          </Notice>
        </KeyForm>
      </DialogBody>
    </Dialog>
  );
}

function PageFooter() {
  return (
    <Footer>
      <NavItem $w={76} $ml={30} $s={17.3}>Feedback</NavItem>
      <NavItem $w={123} $ml={38} $ls={0.15}>English (US)<Caret /></NavItem>
      <Copyright $ls={-0.15}>© 2008 - 2021, Amazon Web Services, Inc. or its affiliates. All rights reserved.</Copyright>
      <NavItem $w={112} $ml={45} $ls={0.15}>Privacy Policy</NavItem>
      <NavItem $w={107} $ml={38} $s={17.2}>Terms of Use</NavItem>
      <NavItem $w={156} $ml={36} $s={17.3}>Cookie preferences</NavItem>
    </Footer>
  );
}

function DownloadShelf() {
  return (
    <Shelf>
      <svg width="17" height="22" viewBox="0 0 17 22">
        <path d="M.5.500h12l4 4v17H.5z" fill="#f7f8f8" stroke="#8b8b8b" />
        <path d="M12.500.500v4h4" fill="none" stroke="#8b8b8b" />
      </svg>
      <FileName>photosite-appkey.pem</FileName>
      <svg width="14" height="9" viewBox="0 0 14 9" fill="none" stroke="#6c7074" strokeWidth="2.300">
        <path d="M1 8l6-6.500L13 8" />
      </svg>
      <ShelfDivider />
      <ShowAll>Show all</ShowAll>
      <Cross s={14} w={2.3} c="#6a6e72" />
    </Shelf>
  );
}

function WindowsTaskbar() {
  return (
    <Taskbar>
      <StartButton>
        <svg width="24" height="24" viewBox="0 0 24 24">
          <path d="M0 3.400L9.800 2v9.500H0zM10.900 1.800L24 0v11.500H10.900zM0 12.500h9.800V22L0 20.600zM10.900 12.500H24V24l-13.100-1.800z" />
        </svg>
      </StartButton>
      <TaskSearch>
        <svg width="24" height="24" viewBox="0 0 24 24" fill="none" stroke="#111" strokeWidth="1.500">
          <circle cx="15.500" cy="8.500" r="7.700" />
          <path d="M10 14L.5 23.500" />
        </svg>
        <span>Type here to search</span>
      </TaskSearch>
      <TaskItem $w={72}>
        <svg width="24" height="24" viewBox="0 0 24 24"><circle cx="12" cy="12" r="9.800" fill="none" stroke="#000" strokeWidth="3" /></svg>
      </TaskItem>
      <TaskItem $w={72}>
        <svg width="24" height="24" viewBox="0 0 24 24" fill="none" stroke="#000" strokeWidth="1.400">
          <path d="M1 .5v3h14v-3M1 23.500v-3h14v3M1 6.500h14v11H1zM22.500 0v5M22.500 12v12" />
          <rect x="21" y="7.500" width="3" height="3" fill="#000" stroke="none" />
        </svg>
      </TaskItem>
      <TaskItem $w={61} $ml={11} $running><EdgeIcon /></TaskItem>
      <TaskItem $w={61} $ml={14} $running><ExplorerIcon /></TaskItem>
      <TaskItem $w={66} $ml={8} $running $active><ChromeIcon /></TaskItem>
      <ActiveStack />
      <TaskItem $w={77}><SIcon /></TaskItem>
      <TaskItem $w={73}><OfficeIcon /></TaskItem>
      <TaskItem $w={77}><PaintIcon /></TaskItem>
      <TaskItem $w={61} $ml={6} $running><RubyMineIcon /></TaskItem>
      <TaskItem $w={61} $ml={14} $running><SnipIcon /></TaskItem>
      <Tray>
        <HelpIcon />
        <TrayIcon $ml={13}>
          <svg width="18" height="10" viewBox="0 0 18 10" fill="none" stroke="#111" strokeWidth="1.500"><path d="M.5 9.500L9 1l8.500 8.500" /></svg>
        </TrayIcon>
        <TrayIcon $ml={15}>
          <svg width="24" height="16" viewBox="0 0 24 16">
            <path d="M5 15.300C-.5 15 0 8.500 4.500 7.500 5.500 2 12 0 15.500 4c4 0 5 2 5.300 4.300 3.500 1 3.500 6.500-.8 7z" fill="#d8d8d8" stroke="#111" strokeWidth="1.300" />
            <path d="M4.500 8C6 2.500 12 1 15 4.500L11 9 4.500 13C1 13 1 9 4.500 8z" fill="#7b7b7b" />
            <path d="M15 4.600c4 0 5 1.900 5.200 4.200L17 12l-6-3z" fill="#a3a3a3" />
          </svg>
        </TrayIcon>
        <TrayIcon $ml={13}>
          <svg width="23" height="13" viewBox="0 0 23 13">
            <rect x=".7" y=".7" width="20" height="11.600" fill="none" stroke="#111" strokeWidth="1.300" />
            <rect x="2.500" y="2.500" width="10" height="8" />
            <rect x="21" y="4" width="2" height="5" />
          </svg>
        </TrayIcon>
        <TrayIcon $ml={16}>
          <svg width="19" height="18" viewBox="0 0 19 18" fill="none" stroke="#333" strokeWidth="1.200">
            <path d="M.8 18A17.500 17.500 0 0 1 18.500.8M5 18A13.500 13.500 0 0 1 18.500 5M9 18a9.500 9.500 0 0 1 9.500-9" />
            <path d="M13 18a6 6 0 0 1 5.500-5.500" />
            <circle cx="17" cy="16.500" r="1.700" fill="#111" stroke="none" />
          </svg>
        </TrayIcon>
        <TrayIcon $ml={14}>
          <svg width="22" height="18" viewBox="0 0 22 18" fill="none" stroke="#111" strokeWidth="1.300">
            <path d="M.7 6h3L9 1v16l-5.300-5h-3zM12 6.500c1.200 1.500 1.200 3.500 0 5M15 4c2.500 3 2.500 7 0 10M18 1.500c4 4.500 4 10.500 0 15" />
          </svg>
        </TrayIcon>
        <Clock>1:28 PM<br />3/1/2021</Clock>
        <Notify>
          <svg width="24" height="40" viewBox="0 0 24 40">
            <path d="M0 8h24v18H12v5l-5-5H0z" />
            <path d="M5 13.500h14M5 17.500h14M5 21.500h9" stroke="#dfe" strokeWidth="1" />
          </svg>
          <NotifyCount>9</NotifyCount>
        </Notify>
        <DesktopEdge />
      </Tray>
    </Taskbar>
  );
}

export default function App() {
  return (
    <Screen>
      <GlobalStyle />
      <BrowserTabs />
      <AddressBar />
      <Bookmarks />
      <Navigation />
      <Viewport>
        <ReviewPage />
        <Scrollbar>
          <Tri up c="#a3a3a3" />
          <Thumb $h={502} $mt={9} $c="#c1c1c1" />
          <Tri c="#505050" />
        </Scrollbar>
        <KeyPairDialog />
      </Viewport>
      <PageFooter />
      <DownloadShelf />
      <WindowsTaskbar />
    </Screen>
  );
}
